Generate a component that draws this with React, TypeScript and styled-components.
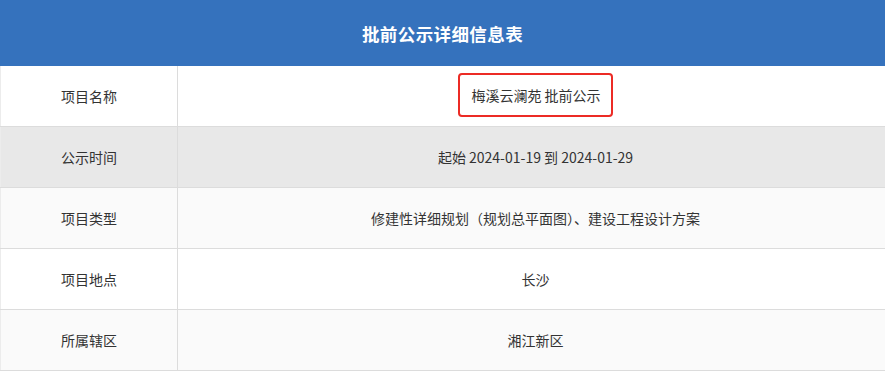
import React from "react";
import styled, { createGlobalStyle } from "styled-components";

const GlobalStyle = createGlobalStyle`
  html, body {
    margin: 0;
    padding: 0;
    background: #ffffff;
  }
  body {
    font-family: "Noto Sans CJK SC", "Noto Sans", "Liberation Sans", sans-serif;
    color: #333333;
  }
`;

const Table = styled.div`
  width: 885px;
  display: flex;
  flex-direction: column;
`;

const Header = styled.div`
  height: 66px;
  background: #3572bd;
  color: #ffffff;
  font-size: 17.5px;
  font-weight: 700;
  display: flex;
  align-items: center;
  justify-content: center;
  letter-spacing: 0.4px;
`;

const Row = styled.div<{ $bg: string }>`
  display: grid;
  grid-template-columns: 178px 1fr;
  height: 60px;
  background: ${(p) => p.$bg};
  border-bottom: 1px solid #dcdcdc;
`;

const LabelCell = styled.div`
  display: flex;
  align-items: center;
  justify-content: center;
  border-right: 1px solid #dcdcdc;
  border-left: 1px solid #ececec;
  font-size: 14px;
  color: #333333;
`;

const ValueCell = styled.div`
  display: flex;
  align-items: center;
  justify-content: center;
  padding-left: 8px;
  font-size: 14px;
  color: #333333;
`;

const Marked = styled.span`
  display: inline-block;
  margin-top: -2px;
  padding: 11px 10px 11px 11px;
  border: 2px solid #ec2b25;
  border-radius: 4px;
  line-height: 18px;
`;

type Item = { label: string; value: React.ReactNode; bg: string };

const items: Item[] = [
  { label: "项目名称", value: <Marked>梅溪云澜苑 批前公示</Marked>, bg: "#ffffff" },
  { label: "公示时间", value: "起始 2024-01-19 到 2024-01-29", bg: "#e8e8e8" },
  { label: "项目类型", value: "修建性详细规划（规划总平面图）、建设工程设计方案", bg: "#fafafa" },
  { label: "项目地点", value: "长沙", bg: "#ffffff" },
  { label: "所属辖区", value: "湘江新区", bg: "#fafafa" },
];

export default function App() {
  return (
    <>
      <GlobalStyle />
      <Table>
        <Header>批前公示详细信息表</Header>
        {items.map((it) => (
          <Row key={it.label} $bg={it.bg}>
            <LabelCell>{it.label}</LabelCell>
            <ValueCell>{it.value}</ValueCell>
          </Row>
        ))}
      </Table>
    </>
  );
}
